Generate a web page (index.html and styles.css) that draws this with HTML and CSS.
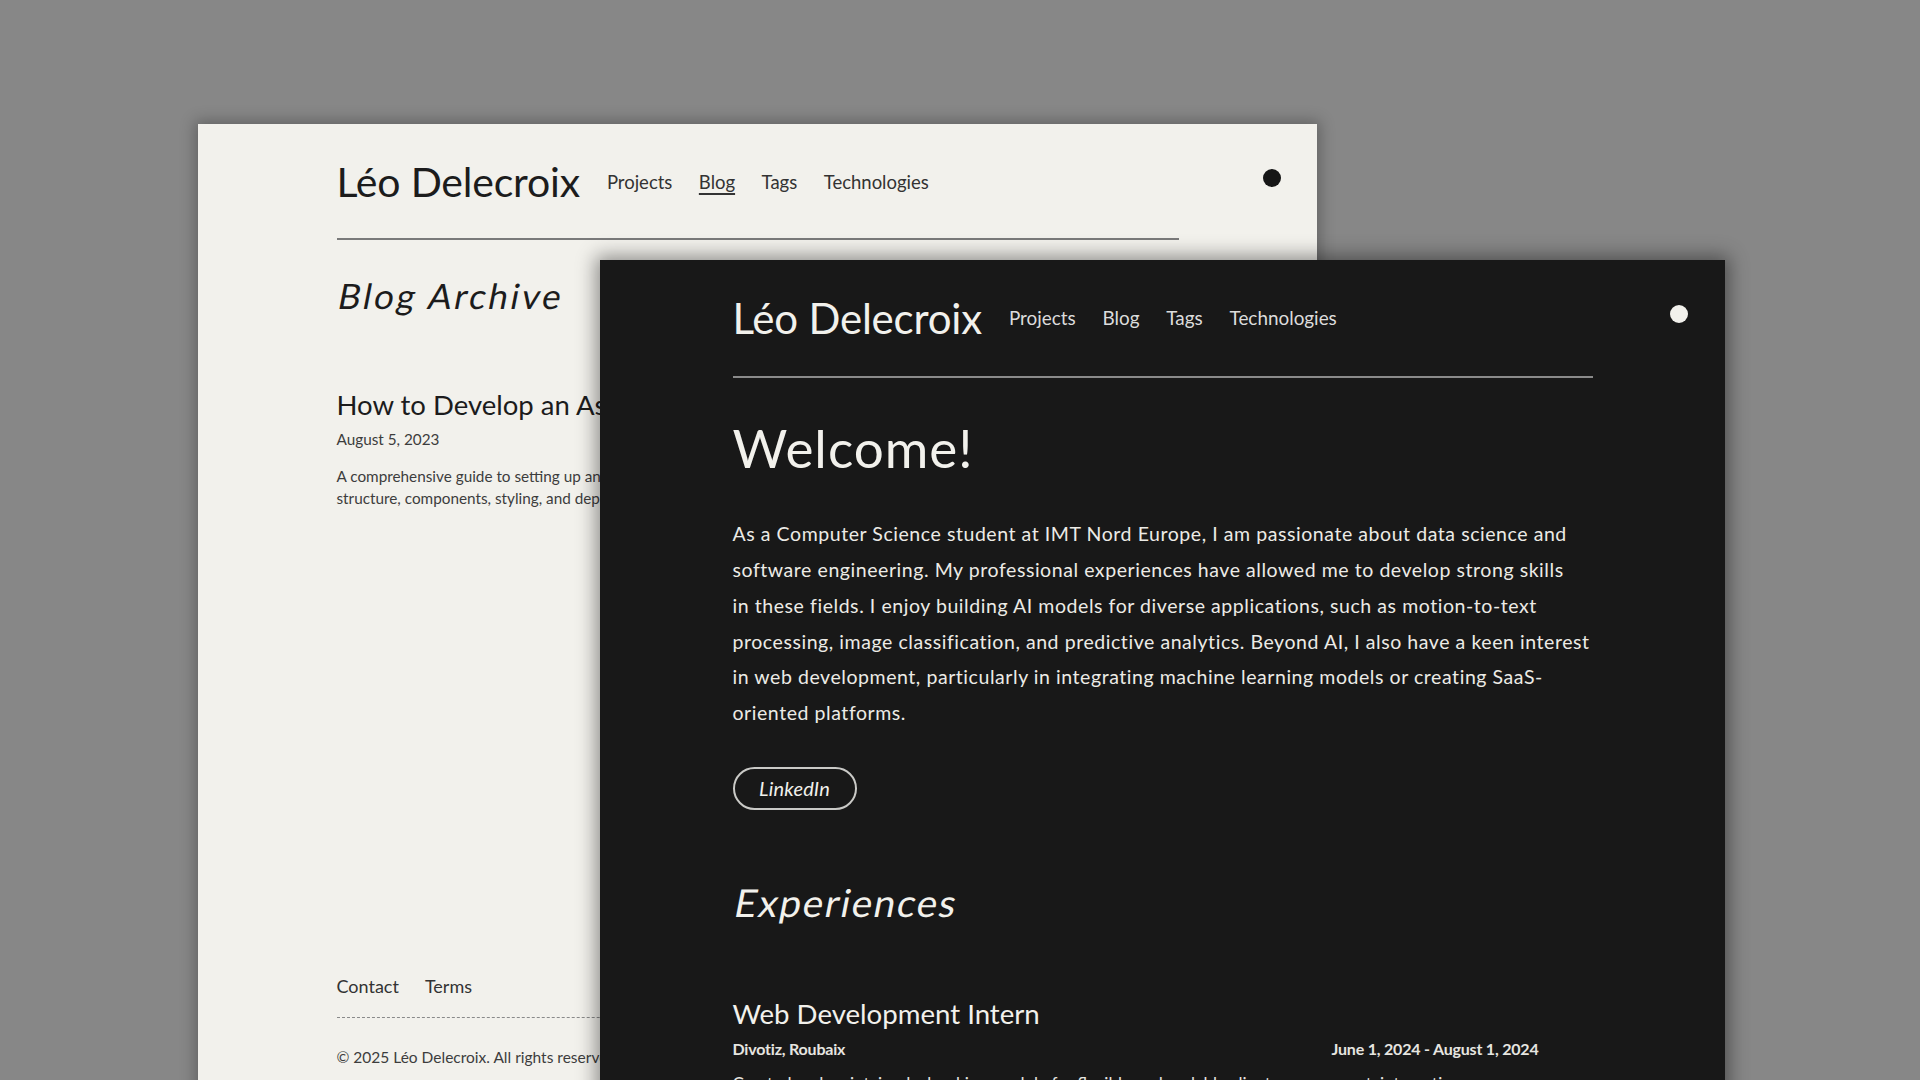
FILE: index.html
```html
<!DOCTYPE html>
<html lang="en">
<head>
<meta charset="utf-8">
<title>Léo Delecroix</title>
<link rel="stylesheet" href="styles.css">
</head>
<body>
<div class="desk">
  <section class="win win-light">
    <span class="toggle toggle-dark" aria-label="Toggle theme"></span>
    <div class="page">
      <header class="site-header">
        <a class="brand">Léo Delecroix</a>
        <nav class="nav">
          <a>Projects</a>
          <a class="current">Blog</a>
          <a>Tags</a>
          <a>Technologies</a>
        </nav>
      </header>
      <hr class="rule">
      <h1 class="archive-title"><span class="slant">Blog Archive</span></h1>
      <article class="post">
        <h2 class="post-title">How to Develop an Astro Portfolio with TypeScript</h2>
        <div class="post-date">August 5, 2023</div>
        <p class="post-desc">A comprehensive guide to setting up an Astro portfolio with TypeScript, covering project<br>structure, components, styling, and deployment.</p>
      </article>
      <footer class="site-footer">
        <div class="footer-links"><a>Contact</a><a>Terms</a></div>
        <div class="footer-sep"></div>
        <p class="copyright">© 2025 Léo Delecroix. All rights reserved.</p>
      </footer>
    </div>
  </section>

  <section class="win win-dark">
    <span class="toggle toggle-light" aria-label="Toggle theme"></span>
    <div class="page page-dark">
      <header class="site-header">
        <a class="brand">Léo Delecroix</a>
        <nav class="nav">
          <a>Projects</a>
          <a>Blog</a>
          <a>Tags</a>
          <a>Technologies</a>
        </nav>
      </header>
      <hr class="rule">
      <h1 class="welcome">Welcome!</h1>
      <p class="intro">As a Computer Science student at IMT Nord Europe, I am passionate about data science and<br>software engineering. My professional experiences have allowed me to develop strong skills<br>in these fields. I enjoy building AI models for diverse applications, such as motion-to-text<br>processing, image classification, and predictive analytics. Beyond AI, I also have a keen interest<br>in web development, particularly in integrating machine learning models or creating SaaS-<br>oriented platforms.</p>
      <a class="pill">LinkedIn</a>
      <h2 class="section-title"><span class="slant">Experiences</span></h2>
      <div class="exp">
        <h3 class="exp-title">Web Development Intern</h3>
        <div class="exp-meta"><span>Divotiz, Roubaix</span><span>June 1, 2024 - August 1, 2024</span></div>
        <p class="exp-desc">Created and maintained a booking module for flexible and scalable client management, integrating new components with the existing platform.</p>
      </div>
    </div>
  </section>
</div>
</body>
</html>
```

FILE: styles.css
```css
* { box-sizing: border-box; }
html, body { margin: 0; padding: 0; }
body {
  background: #878787;
  font-family: Lato, "Open Sans", sans-serif;
  overflow: hidden;
}
.desk {
  position: relative;
  width: 1920px;
  height: 1080px;
  overflow: hidden;
}
.win {
  position: absolute;
  overflow: hidden;
}
.win-light {
  left: 198px;
  top: 124px;
  width: 1119px;
  height: 980px;
  background: #f2f1ec;
  color: #1c1c1c;
  box-shadow: 0 0 14px 3px rgba(0,0,0,0.28);
}
.win-dark {
  left: 600px;
  top: 260px;
  width: 1125px;
  height: 860px;
  background: #181818;
  color: #f2f1ec;
  box-shadow: 0 0 18px 4px rgba(0,0,0,0.42);
}
.toggle {
  position: absolute;
  top: 45px;
  right: 36px;
  width: 18px;
  height: 18px;
  border-radius: 50%;
}
.toggle-dark { background: #161616; }
.toggle-light { background: #f2f1ec; right: 37px; top: 45px; }

.page {
  width: 842px;
  margin: 0 auto;
  padding-top: 33px;
}
.page-dark {
  width: 860px;
  padding-top: 33px;
}
.site-header {
  display: flex;
  align-items: center;
  gap: 27px;
}
.brand {
  font-size: 41px;
  line-height: 1.2;
  font-weight: 400;
  letter-spacing: -0.2px;
}
.page-dark .brand { font-size: 42px; }
.nav {
  display: flex;
  gap: 26.5px;
  font-size: 18.5px;
  line-height: 1.2;
  color: #333;
}
.page-dark .nav { font-size: 18.9px; color: #dcdcdc; gap: 26.8px; }
.nav .current {
  text-decoration: underline;
  text-underline-offset: 4px;
  text-decoration-thickness: 1.5px;
}
.rule {
  border: 0;
  height: 2px;
  margin: 32px 0 0;
  background: #7a7a7a;
}
.page-dark .rule { background: #8a8a8a; margin-top: 32.5px; }

.slant {
  display: inline-block;
  transform: skewX(-11deg);
  transform-origin: 0 100%;
  margin-left: -2px;
}
.archive-title {
  margin: 34px 0 0;
  font-size: 35px;
  line-height: 1.2;
  font-weight: 400;
  letter-spacing: 2.7px;
}
.post { margin-top: 72px; }
.post-title {
  margin: 0;
  font-size: 27.5px;
  line-height: 1.2;
  font-weight: 400;
}
.post-date {
  margin-top: 9px;
  font-size: 15.3px;
  line-height: 1.2;
  color: #3d3d3d;
  font-weight: 400;
}
.post-desc {
  margin: 16px 0 0;
  font-size: 15.3px;
  line-height: 22.3px;
  color: #3d3d3d;
}
.site-footer { margin-top: 467px; }
.footer-links {
  display: flex;
  gap: 26px;
  font-size: 18px;
  line-height: 1.2;
  color: #333;
}
.footer-sep {
  margin-top: 19px;
  border-top: 1px dashed #8a8a8a;
}
.copyright {
  margin: 30px 0 0;
  font-size: 15.5px;
  line-height: 1.2;
  color: #3d3d3d;
}

.welcome {
  margin: 38px 0 0;
  font-size: 53px;
  line-height: 1.2;
  font-weight: 400;
  letter-spacing: 1px;
}
.intro {
  margin: 37px 0 0;
  width: 880px;
  font-size: 19.5px;
  line-height: 35.7px;
  letter-spacing: 0.56px;
  color: #ecebe6;
}
.pill {
  margin-top: 36px;
  display: inline-flex;
  align-items: center;
  justify-content: center;
  width: 124px;
  height: 43px;
  border: 2px solid #c9c9c6;
  border-radius: 22px;
  font-style: italic;
  font-size: 20px;
  letter-spacing: 0.2px;
  color: #f2f1ec;
}
.section-title {
  margin: 69px 0 0;
  font-size: 38.5px;
  line-height: 1.2;
  font-weight: 400;
  letter-spacing: 1.75px;
}
.exp { margin-top: 72px; }
.exp-title {
  margin: 0;
  font-size: 27.6px;
  line-height: 1.2;
  font-weight: 400;
}
.exp-meta {
  margin-top: 9px;
  display: flex;
  justify-content: space-between;
  padding-right: 54px;
  font-size: 16px;
  line-height: 1.2;
  font-weight: 700;
  letter-spacing: -0.2px;
  color: #e6e5e0;
}
.exp-desc {
  margin: 12px 0 0;
  font-size: 17px;
  line-height: 1.6;
  color: #e6e5e0;
}
```
